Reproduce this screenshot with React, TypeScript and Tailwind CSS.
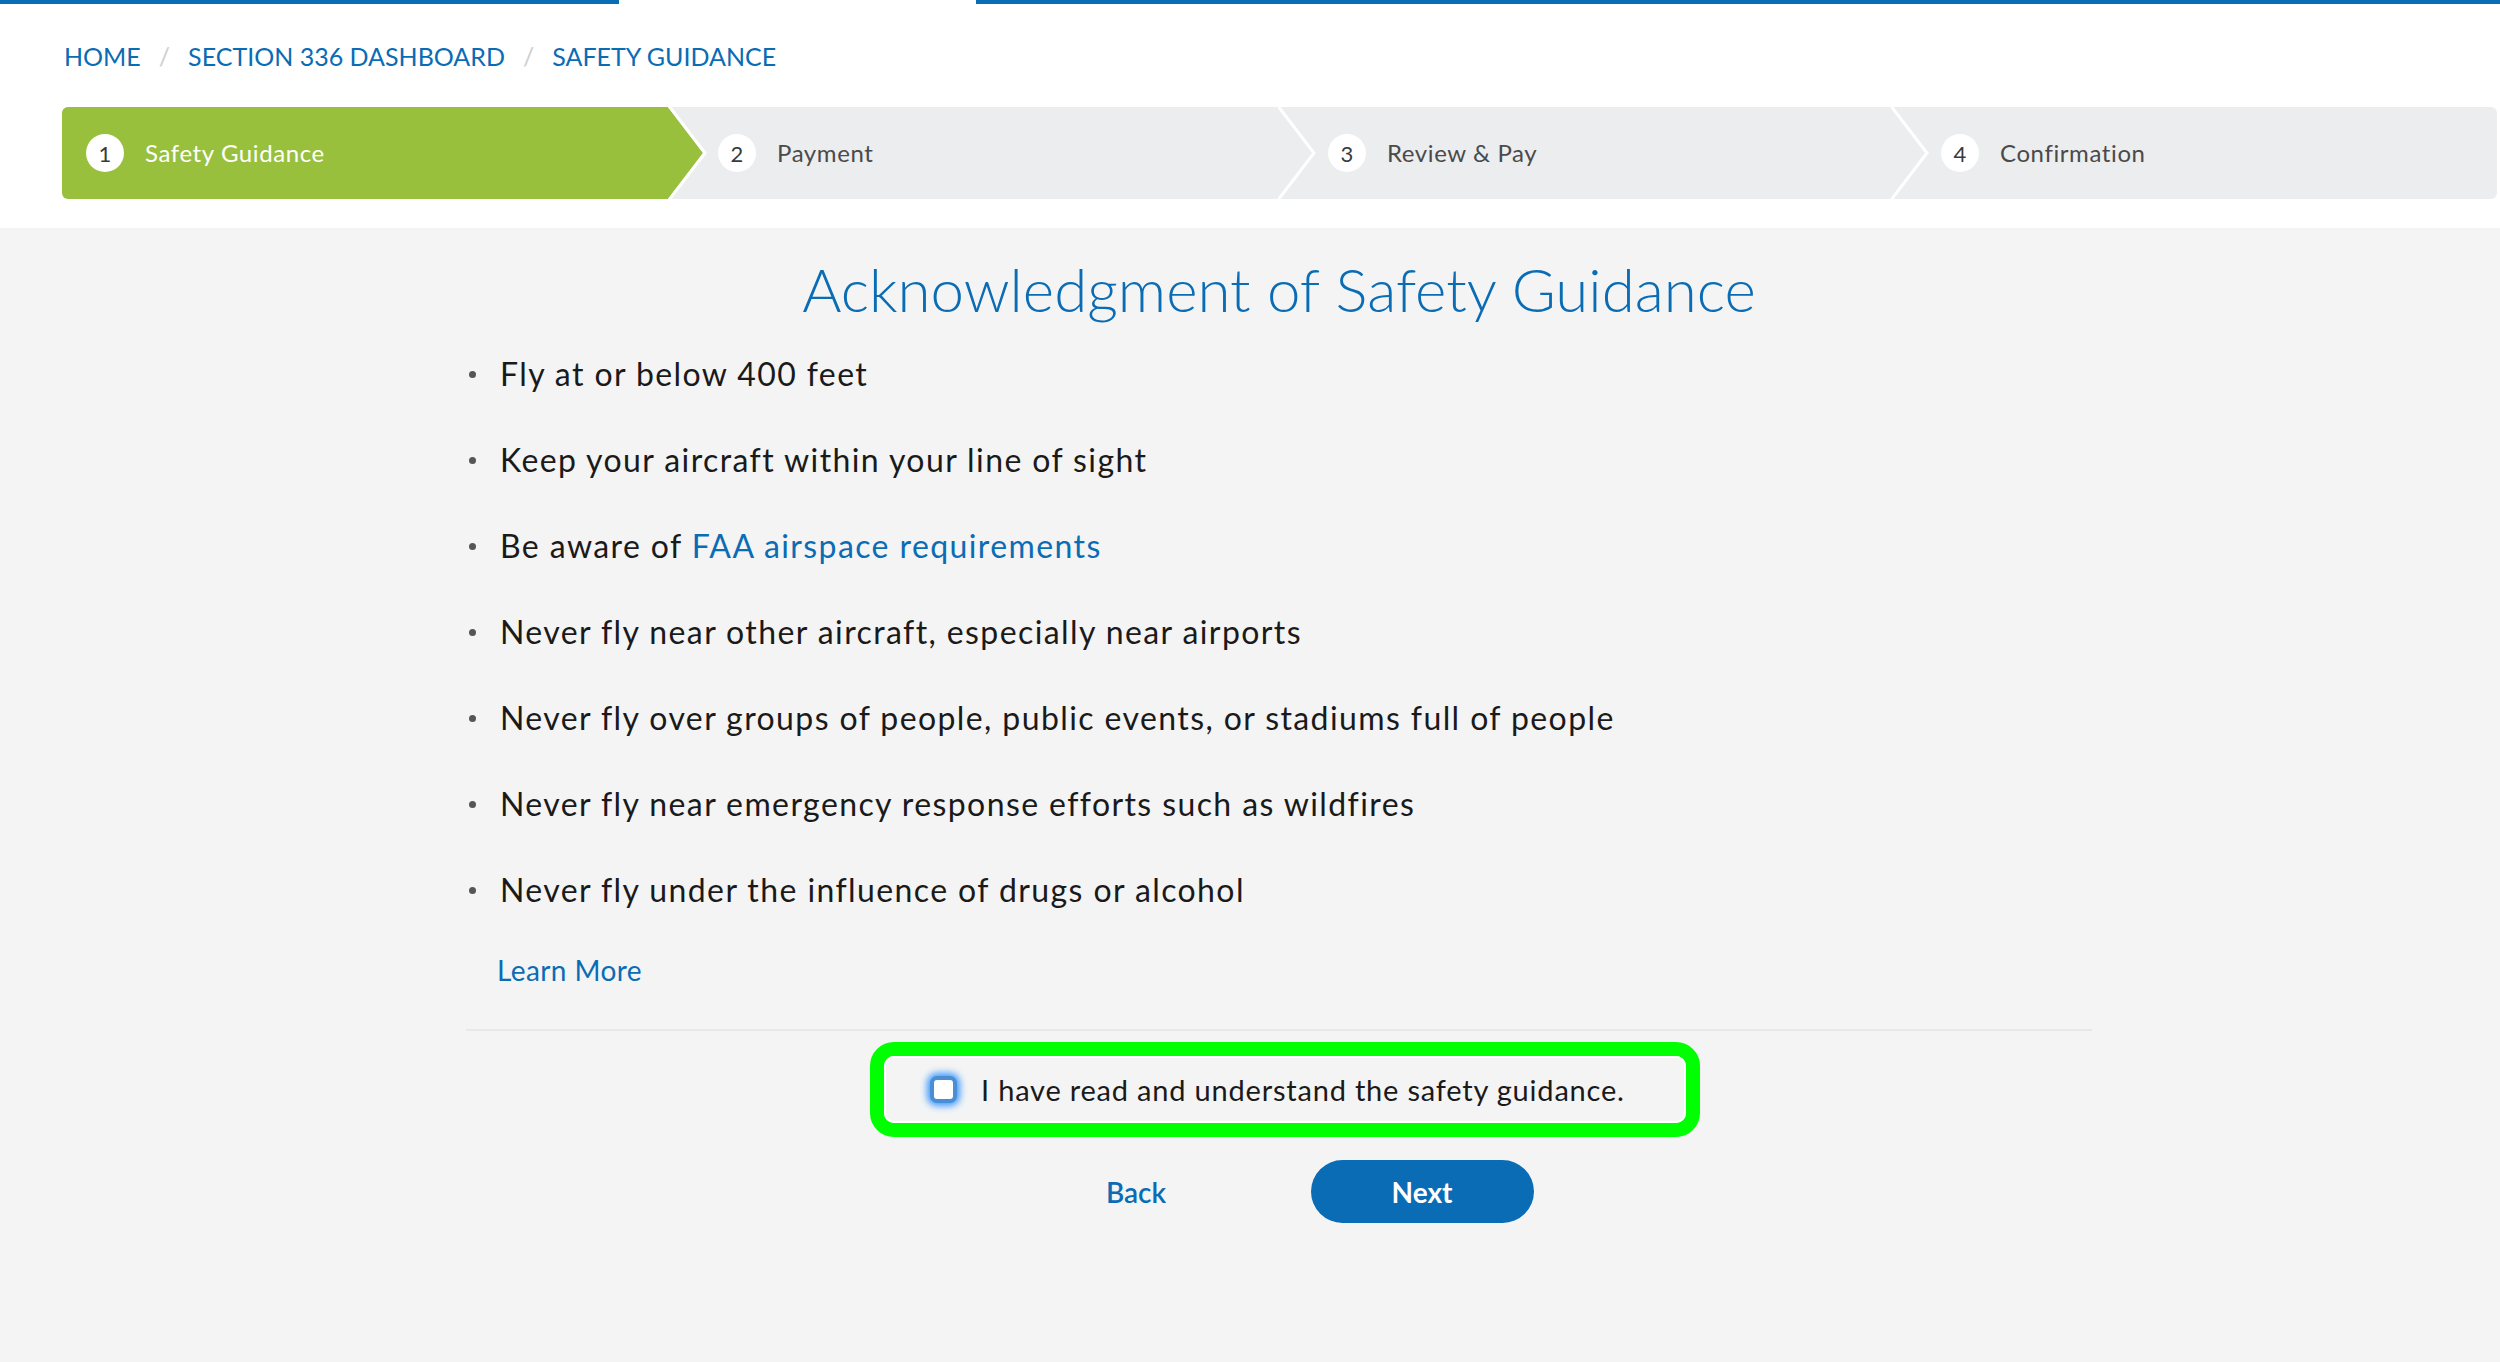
const crumbs = ["HOME", "SECTION 336 DASHBOARD", "SAFETY GUIDANCE"];

const steps = [
  { n: 1, label: "Safety Guidance", w: "w-[606px]" },
  { n: 2, label: "Payment", w: "w-[610px]" },
  { n: 3, label: "Review & Pay", w: "w-[613px]" },
  { n: 4, label: "Confirmation", w: "flex-1" },
];

const rules = [
  "Fly at or below 400 feet",
  "Keep your aircraft within your line of sight",
  "LINK",
  "Never fly near other aircraft, especially near airports",
  "Never fly over groups of people, public events, or stadiums full of people",
  "Never fly near emergency response efforts such as wildfires",
  "Never fly under the influence of drugs or alcohol",
];

const Chevron = ({ active }: { active: boolean }) => (
  <svg
    className="absolute top-0 left-full z-10"
    width="40"
    height="92"
    viewBox="0 0 40 92"
  >
    {active && <polygon points="0,0 35,46 0,92" fill="#98c03d" />}
    <polyline
      points={active ? "1,-1 37,46 1,93" : "0,-1 36,46 0,93"}
      fill="none"
      stroke="#ffffff"
      strokeWidth="3"
    />
  </svg>
);

const Stepper = () => (
  <div className="ml-[62px] mr-[3px] flex h-[92px] rounded-[6px] bg-[#ecedef]">
    {steps.map((s, i) => {
      const active = i === 0;
      return (
        <div
          key={s.n}
          className={`relative flex shrink-0 items-center gap-[21px] ${s.w} ${
            active ? "rounded-l-[6px] bg-[#98c03d] pl-[24px]" : "pl-[50px]"
          }`}
        >
          <span className="flex h-[38px] w-[38px] items-center justify-center rounded-full bg-white text-[22px] text-[#3a3a3a]">
            {s.n}
          </span>
          <span
            className={`text-[24px] tracking-[0.6px] ${
              active ? "text-white" : "text-[#4a4a4a]"
            }`}
          >
            {s.label}
          </span>
          {i < steps.length - 1 && <Chevron active={active} />}
        </div>
      );
    })}
  </div>
);

export default function App() {
  return (
    <div className="min-h-[1362px] bg-[#f4f4f4] font-['Lato',sans-serif]">
      <header className="bg-white pb-[29px]">
        <div className="flex h-[4px]">
          <div className="w-[619px] bg-[#0a6cb4]" />
          <div className="w-[357px]" />
          <div className="flex-1 bg-[#0a6cb4]" />
        </div>
        <nav className="mt-[38px] flex h-[29px] items-center pl-[64px] text-[25px] leading-[29px] text-[#0a6cb4]">
          {crumbs.map((c, i) => (
            <span key={c} className="flex items-center">
              {i > 0 && <span className="mx-[18px] text-[#cfcfcf]">/</span>}
              <a href="#">{c}</a>
            </span>
          ))}
        </nav>
        <div className="mt-[36px]">
          <Stepper />
        </div>
      </header>

      <main className="ml-[466px] w-[1626px] pt-[26px]">
        <h1 className="text-center text-[60px] font-light leading-[70px] text-[#0a6cb4]">
          Acknowledgment of Safety Guidance
        </h1>

        <ul className="mt-[30px] flex flex-col gap-[46px]">
          {rules.map((r, i) => (
            <li
              key={i}
              className="flex items-center text-[32px] leading-[40px] tracking-[1.4px] text-[#1a1a1a]"
            >
              <span className="ml-[3px] mr-[24px] h-[7px] w-[7px] rounded-full bg-[#555555]" />
              {r === "LINK" ? (
                <span>
                  Be aware of{" "}
                  <a href="#" className="text-[#0a6cb4]">
                    FAA airspace requirements
                  </a>
                </span>
              ) : (
                <span>{r}</span>
              )}
            </li>
          ))}
        </ul>

        <a
          href="#"
          className="ml-[31px] mt-[43px] block text-[28px] leading-[34px] tracking-[0.4px] text-[#0a6cb4]"
        >
          Learn More
        </a>

        <hr className="mt-[42px] border-t-2 border-[#e8e8e8]" />

        <div className="mt-[11px] flex justify-center">
          <div className="ml-[12px] w-[830px] rounded-[24px] border-[14px] border-[#00ff00]">
            <label className="flex h-[67px] items-center gap-[24px] rounded-[10px] border-2 border-white pl-[44px]">
              <span className="h-[27px] w-[27px] rounded-[7px] border-[4px] border-[#4a8fd6] bg-white shadow-[0_0_7px_3px_#3d9bff]" />
              <span className="text-[29px] tracking-[0.8px] text-[#1a1a1a]">
                I have read and understand the safety guidance.
              </span>
            </label>
          </div>
        </div>

        <div className="mt-[23px] flex justify-center gap-[63px]">
          <button className="h-[63px] w-[223px] text-[28px] font-semibold text-[#0a6cb4]">
            Back
          </button>
          <button className="h-[63px] w-[223px] rounded-full bg-[#0a6cb4] text-[28px] font-bold text-white">
            Next
          </button>
        </div>
      </main>
    </div>
  );
}
